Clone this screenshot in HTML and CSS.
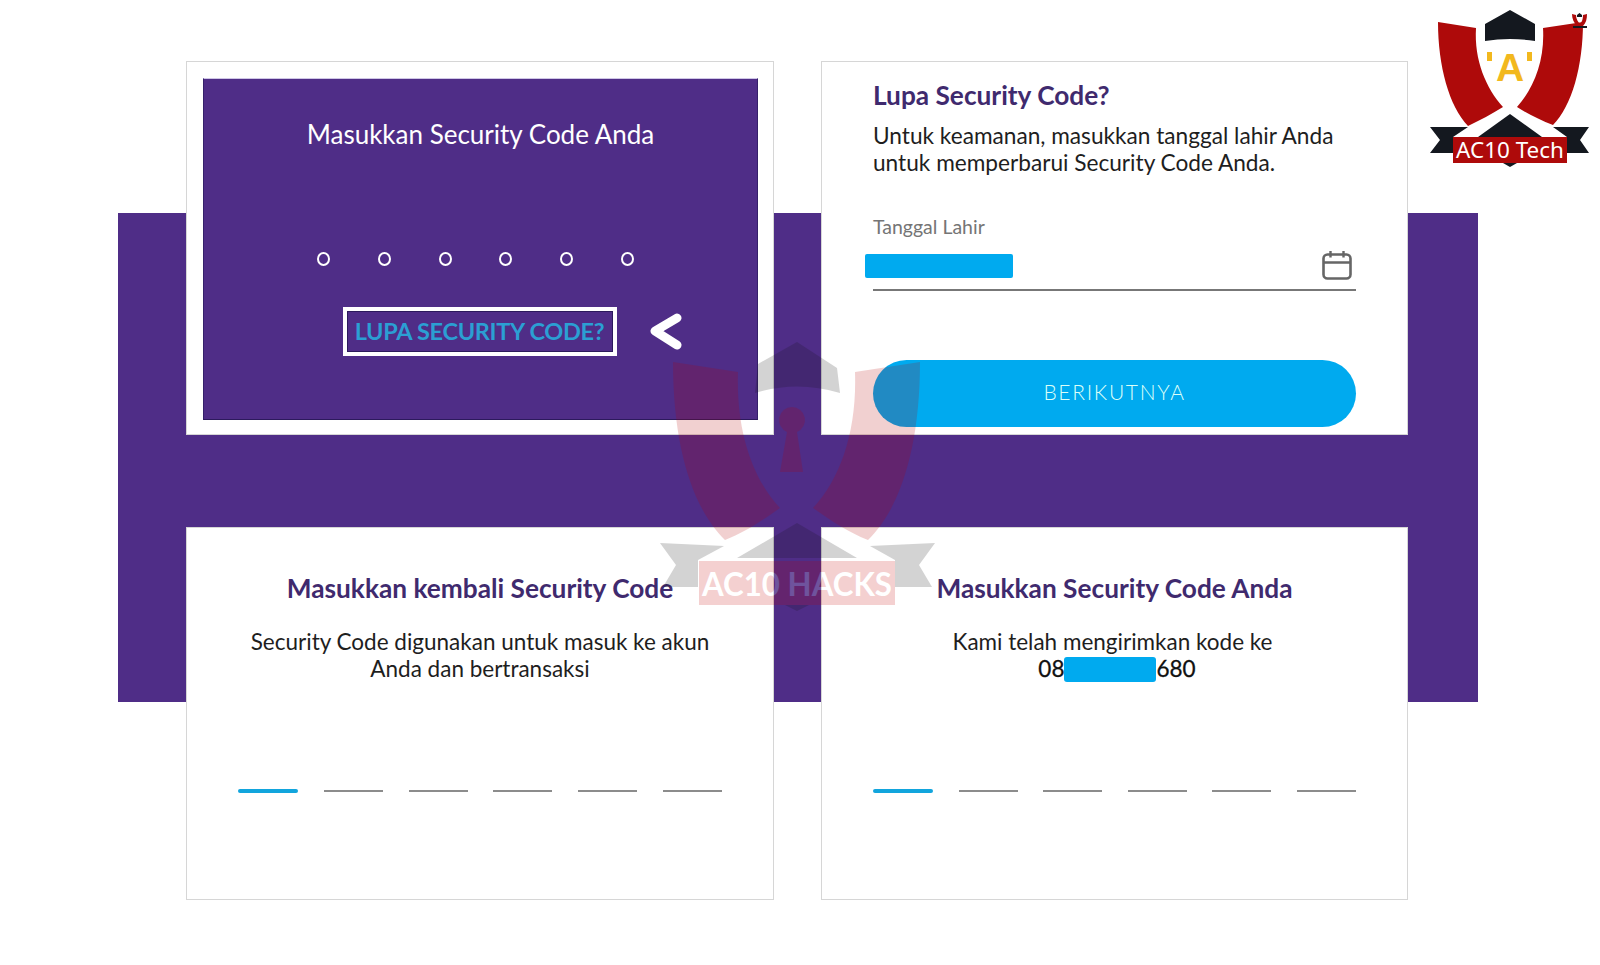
FILE: index.html
```html
<!DOCTYPE html>
<html lang="id">
<head>
<meta charset="utf-8">
<title>Lupa Security Code</title>
<link rel="stylesheet" href="styles.css">
</head>
<body>
<main class="stage">
  <section class="card card-framed">
    <div class="pin-panel">
      <h2 class="pin-title">Masukkan Security Code Anda</h2>
      <div class="pin-dots">
        <span class="pin-dot"></span><span class="pin-dot"></span><span class="pin-dot"></span><span class="pin-dot"></span><span class="pin-dot"></span><span class="pin-dot"></span>
      </div>
      <div class="forgot-box">
        <span class="forgot-link">LUPA SECURITY CODE?</span>
        <svg class="chevron" viewBox="0 0 34 38" width="34" height="38"><polyline points="29,5 7,18 29,32" fill="none" stroke="#fff" stroke-width="9" stroke-linecap="round" stroke-linejoin="round"/></svg>
      </div>
    </div>
  </section>

  <section class="card card-form">
    <h2 class="card-heading">Lupa Security Code?</h2>
    <p class="card-text">Untuk keamanan, masukkan tanggal lahir Anda<br>untuk memperbarui Security Code Anda.</p>
    <label class="field-label">Tanggal Lahir</label>
    <div class="field-row">
      <span class="redact-date"></span>
      <svg class="calendar" viewBox="0 0 30 30" width="30" height="30"><rect x="1.500" y="4.500" width="27" height="24" rx="4" fill="none" stroke="#666" stroke-width="2.600"/><path d="M1.500 12.500H28.500M8.500 1V7.500M21.500 1V7.500" fill="none" stroke="#666" stroke-width="2.400"/></svg>
    </div>
    <button class="primary-btn">BERIKUTNYA</button>
  </section>

  <section class="card card-code">
    <h2 class="card-heading">Masukkan kembali Security Code</h2>
    <p class="card-text">Security Code digunakan untuk masuk ke akun<br>Anda dan bertransaksi</p>
    <div class="dashes">
      <span class="dash dash-active"></span><span class="dash"></span><span class="dash"></span><span class="dash"></span><span class="dash"></span><span class="dash"></span>
    </div>
  </section>

  <section class="card card-code">
    <h2 class="card-heading">Masukkan Security Code Anda</h2>
    <p class="card-text"><span class="sent-line">Kami telah mengirimkan kode ke</span><br><span class="phone">08<span class="redact-phone"></span>680</span></p>
    <div class="dashes">
      <span class="dash dash-active"></span><span class="dash"></span><span class="dash"></span><span class="dash"></span><span class="dash"></span><span class="dash"></span>
    </div>
  </section>
</main>

<svg class="watermark" viewBox="0 0 1600 965" width="1600" height="965">
  <path fill="#b80000" d="M673 362L738 372C736 430 752 478 780 508C760 522 745 532 725 540C694 510 673 450 673 362Z"/>
  <path fill="#b80000" d="M920 362L855 372C857 430 841 478 813 508C833 522 848 532 868 540C899 510 920 450 920 362Z"/>
  <path fill="#b80000" d="M792 407A13 13 0 0 1 797 432L803 472H780L787 432A13 13 0 0 1 792 407Z"/>
  <path fill="#111" d="M797 342L758 364L755 393Q797 380 840 393L837 368Z"/>
  <path fill="#111" d="M797 523L737 558H857ZM785 605L797 611L809 605Z"/>
  <path fill="#111" d="M660 543L676 565L663 587H698V560L724 546ZM935 543L919 565L932 587H895V560L870 546Z"/>
  <rect x="699" y="561" width="196" height="44" fill="#c40000"/>
  <text class="watermark-text" x="702" y="596" textLength="190" lengthAdjust="spacingAndGlyphs">AC10 HACKS</text>
</svg>

<svg class="brand" viewBox="1425 0 170 172" width="170" height="172">
  <path fill="#ae0a0a" d="M1438 22L1476 28C1474 60 1486 88 1503 107C1492 114 1480 120 1468 126C1449 106 1438 66 1438 22Z"/>
  <path fill="#ae0a0a" d="M1583 22L1543 28C1545 60 1534 88 1517 107C1528 114 1540 120 1553 125C1572 106 1583 66 1583 22Z"/>
  <path fill="#14181f" d="M1510 10L1485 24V41Q1510 37 1535 41V24Z"/>
  <rect x="1487" y="52" width="5" height="9" fill="#f2b81e"/>
  <rect x="1527" y="52" width="5" height="9" fill="#f2b81e"/>
  <text class="brand-a" x="1510" y="81" text-anchor="middle">A</text>
  <path fill="#14181f" d="M1510 114L1478 137H1542ZM1430 127H1468L1453 137V153H1430L1440 140ZM1589 127H1553L1567 137V153H1589L1580 140ZM1503 163L1510 167L1517 163Z"/>
  <rect x="1453" y="137" width="114" height="26" fill="#ae0a0a"/>
  <text class="brand-name" x="1456" y="158" textLength="108" lengthAdjust="spacingAndGlyphs">AC10 Tech</text>
  <path fill="#ae0a0a" d="M1572 14L1576 15C1576 19 1578 22 1580 24L1577 26C1574 23 1572 19 1572 14ZM1587 14L1583 15C1583 19 1582 22 1580 24L1583 26C1586 23 1587 19 1587 14Z"/>
  <path fill="#14181f" d="M1579.500 13L1577 15V17H1582V15ZM1573 26H1587V28H1573Z"/>
</svg>
</body>
</html>
```

FILE: styles.css
```css
* { box-sizing: border-box; }

html, body { margin: 0; padding: 0; background: #fff; }

body {
  position: relative;
  width: 1600px;
  height: 965px;
  padding-top: 61px;
  overflow: hidden;
  font-family: Lato, "Open Sans", sans-serif;
}

.stage {
  display: grid;
  grid-template-columns: 588px 587px;
  grid-template-rows: 374px 373px;
  column-gap: 47px;
  row-gap: 92px;
  width: 1360px;
  margin-left: 118px;
  padding-left: 68px;
  background: linear-gradient(#4f2d87, #4f2d87) 0 152px / 100% 489px no-repeat;
}

.card {
  background: #fff;
  border: 1px solid #d6d6d6;
  color: #1e1e1e;
}

.card-framed { padding: 16px 15px 14px 16px; }

.pin-panel {
  display: flex;
  flex-direction: column;
  align-items: center;
  height: 100%;
  background: #4f2d87;
  border-top: 1px solid #cfc6e6;
  border-right: 1px solid #35206a;
  border-bottom: 1px solid #2c1a5c;
  border-left: 1px solid #35206a;
  color: #fff;
}

.pin-title {
  margin: 40px 0 0;
  font-size: 26px;
  line-height: 30px;
  font-weight: 400;
}

.pin-dots {
  display: flex;
  gap: 47.700px;
  margin: 103px 10px 0 0;
}

.pin-dot {
  width: 13px;
  height: 14px;
  border: 2px solid #fff;
  border-radius: 50%;
}

.forgot-box {
  position: relative;
  display: flex;
  align-items: center;
  justify-content: center;
  width: 274px;
  height: 49px;
  margin: 41px 2px 0 0;
  padding-bottom: 2px;
  border: 4px solid #fff;
  box-shadow: inset 0 0 0 1px #2c1a5c;
}

.forgot-link {
  font-size: 23.500px;
  font-weight: 700;
  color: #2b9fd3;
  letter-spacing: -0.3px;
}

.chevron {
  position: absolute;
  left: calc(100% + 35px);
  top: 2px;
}

.card-form { padding: 17px 51px 0 51px; }

.card-heading {
  margin: 0;
  font-size: 26.250px;
  line-height: 32px;
  font-weight: 700;
  color: #3f2a6e;
}

.card-text {
  margin: 11px 0 0;
  font-size: 22.650px;
  line-height: 27.300px;
  color: #1e1e1e;
}

.field-label {
  display: block;
  margin-top: 38px;
  font-size: 19.500px;
  line-height: 24px;
  color: #757575;
}

.field-row {
  display: flex;
  justify-content: space-between;
  align-items: center;
  height: 40px;
  margin-top: 12px;
  padding-right: 4px;
  padding-bottom: 8px;
  border-bottom: 2px solid #777;
}

.redact-date {
  width: 148px;
  height: 24px;
  margin-left: -8px;
  border-radius: 2px;
  background: #00aaef;
}

.calendar { margin-top: -2px; }

.primary-btn {
  display: block;
  width: 100%;
  height: 67px;
  margin-top: 69px;
  padding-bottom: 4px;
  border: 0;
  border-radius: 34px;
  background: #00aaef;
  color: #dcfff8;
  font-family: inherit;
  font-size: 21px;
  font-weight: 300;
  letter-spacing: 1.700px;
}

.card-code { padding: 44px 51px 0; text-align: center; }

.card-code .card-text { margin-top: 23.500px; font-size: 22.500px; }

.sent-line { margin-right: 4px; }

.phone {
  display: inline-block;
  margin-left: 5px;
  color: #111;
  -webkit-text-stroke: 0.3px #111;
}

.redact-phone {
  display: inline-block;
  width: 92px;
  height: 25px;
  vertical-align: -5px;
  border-radius: 3px;
  background: #00aaef;
}

.dashes {
  display: flex;
  justify-content: space-between;
  align-items: center;
  height: 4px;
  margin-top: 107px;
}

.dash {
  width: 59px;
  height: 2px;
  background: #8c8c8c;
}

.dash-active {
  width: 60px;
  height: 4px;
  border-radius: 2px;
  background: #12a5dd;
}

.watermark {
  position: absolute;
  left: 0;
  top: 0;
  opacity: 0.18;
  pointer-events: none;
}

.watermark-text {
  font-family: Lato, sans-serif;
  font-size: 33px;
  font-weight: 700;
  fill: #fff;
}

.brand {
  position: absolute;
  left: 1425px;
  top: 0;
}

.brand-a {
  font-family: "Liberation Sans", sans-serif;
  font-size: 39px;
  font-weight: 700;
  fill: #f2b81e;
}

.brand-name {
  font-family: "Noto Sans", sans-serif;
  font-size: 21px;
  fill: #fff;
}
```
